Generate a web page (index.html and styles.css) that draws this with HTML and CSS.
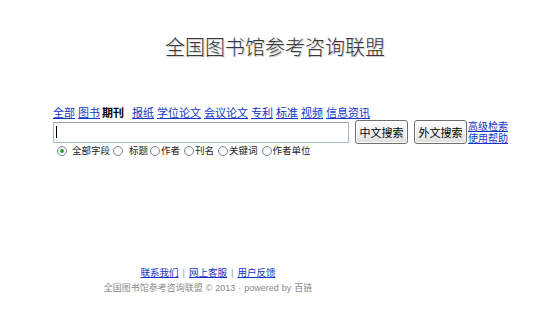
FILE: index.html
```html
<!DOCTYPE html>
<html lang="zh-CN">
<head>
<meta charset="utf-8">
<title>全国图书馆参考咨询联盟</title>
<link rel="stylesheet" href="styles.css">
</head>
<body>
<div class="page">
  <h1 class="title">全国图书馆参考咨询联盟</h1>
  <div class="search">
    <nav class="tabs">
      <a href="#">全部</a>
      <a href="#">图书</a>
      <span class="current">期刊</span>
      <a href="#">报纸</a>
      <a href="#">学位论文</a>
      <a href="#">会议论文</a>
      <a href="#">专利</a>
      <a href="#">标准</a>
      <a href="#">视频</a>
      <a href="#">信息资讯</a>
    </nav>
    <div class="bar">
      <div class="query"><span class="caret"></span></div>
      <button class="btn" type="button">中文搜索</button>
      <button class="btn" type="button">外文搜索</button>
      <div class="extra">
        <a href="#">高级检索</a>
        <a href="#">使用帮助</a>
      </div>
    </div>
    <div class="fields">
      <label class="opt opt-first"><span class="radio checked"></span>全部字段</label>
      <label class="opt opt-second"><span class="radio"></span>标题</label>
      <label class="opt"><span class="radio"></span>作者</label>
      <label class="opt"><span class="radio"></span>刊名</label>
      <label class="opt"><span class="radio"></span>关键词</label>
      <label class="opt"><span class="radio"></span>作者单位</label>
    </div>
  </div>
  <footer class="foot">
    <div class="foot-links">
      <a href="#">联系我们</a><span class="sep">|</span><a href="#">网上客服</a><span class="sep">|</span><a href="#">用户反馈</a>
    </div>
    <div class="copy">全国图书馆参考咨询联盟 © 2013 · powered by 百链</div>
  </footer>
</div>
</body>
</html>
```
FILE: styles.css
```css
* { box-sizing: border-box; }
html, body {
  margin: 0;
  padding: 0;
  background: #fff;
}
body {
  font-family: "Liberation Sans", "Noto Sans CJK SC", sans-serif;
  color: #000;
}
.page {
  width: 544px;
  height: 321px;
  overflow: hidden;
}
.title {
  margin: 36px 0 0 0;
  padding-left: 6px;
  text-align: center;
  font-size: 20px;
  line-height: 24px;
  font-weight: 300;
  color: #383838;
  text-shadow: 1px 1px 1px #c4c4c4;
}
.search {
  margin-left: 53px;
}
.tabs {
  margin-top: 46px;
  display: flex;
  gap: 3px;
  font-size: 11px;
  line-height: 14px;
  height: 14px;
}
.tabs a {
  color: #1035c8;
  text-decoration: underline;
}
.tabs .current {
  font-weight: bold;
  color: #000;
  margin: 0 5px 0 -1px;
}
.bar {
  display: flex;
  align-items: center;
  height: 24px;
}
.query {
  width: 296px;
  height: 21px;
  border: 1px solid #aab8c8;
  border-top-color: #96a3b3;
  background: #fff;
  display: flex;
  align-items: center;
  padding-left: 2px;
}
.caret {
  width: 1px;
  height: 12px;
  background: #000;
}
.btn {
  margin-left: 6px;
  width: 53px;
  height: 24px;
  padding: 0;
  border: 1px solid #6f6f6f;
  border-radius: 3px;
  background: linear-gradient(#fdfdfd, #ececec 60%, #dedede);
  font-family: "Liberation Sans", "Noto Sans CJK SC", sans-serif;
  font-size: 11px;
  color: #000;
  box-shadow: inset 0 0 0 1px #fff;
}
.extra {
  margin-left: 1px;
  display: flex;
  flex-direction: column;
  font-size: 10px;
  line-height: 12px;
  margin-top: 1px;
}
.extra a {
  color: #1035c8;
  text-decoration: underline;
}
.fields {
  margin-top: 1px;
  display: flex;
  align-items: center;
  font-size: 9.5px;
  line-height: 12px;
  height: 12px;
  color: #222;
}
.opt {
  display: inline-flex;
  align-items: center;
  margin-right: 4px;
}
.opt-first {
  margin-left: 4px;
  margin-right: 3px;
}
.opt-first .radio {
  margin-right: 5px;
}
.opt-second {
  margin-right: 2px;
}
.opt-second .radio {
  margin-right: 6px;
}
.radio {
  width: 10px;
  height: 10px;
  border: 1px solid #7d8791;
  border-radius: 50%;
  background: radial-gradient(circle at 60% 60%, #ffffff 30%, #e4e6e8 100%);
  margin-right: 1px;
  display: inline-flex;
  align-items: center;
  justify-content: center;
}
.radio.checked::after {
  content: "";
  width: 4px;
  height: 4px;
  border-radius: 50%;
  background: #2aa52a;
}
.foot {
  margin-top: 109px;
  margin-left: 53px;
  width: 310px;
  text-align: center;
}
.foot-links {
  font-size: 9.5px;
  line-height: 14px;
}
.foot-links a {
  color: #1035c8;
  text-decoration: underline;
}
.sep {
  color: #999;
  margin: 0 4px;
}
.copy {
  margin-top: 1px;
  font-size: 9px;
  line-height: 14px;
  color: #8a8a8a;
  word-spacing: 0.5px;
}
```
